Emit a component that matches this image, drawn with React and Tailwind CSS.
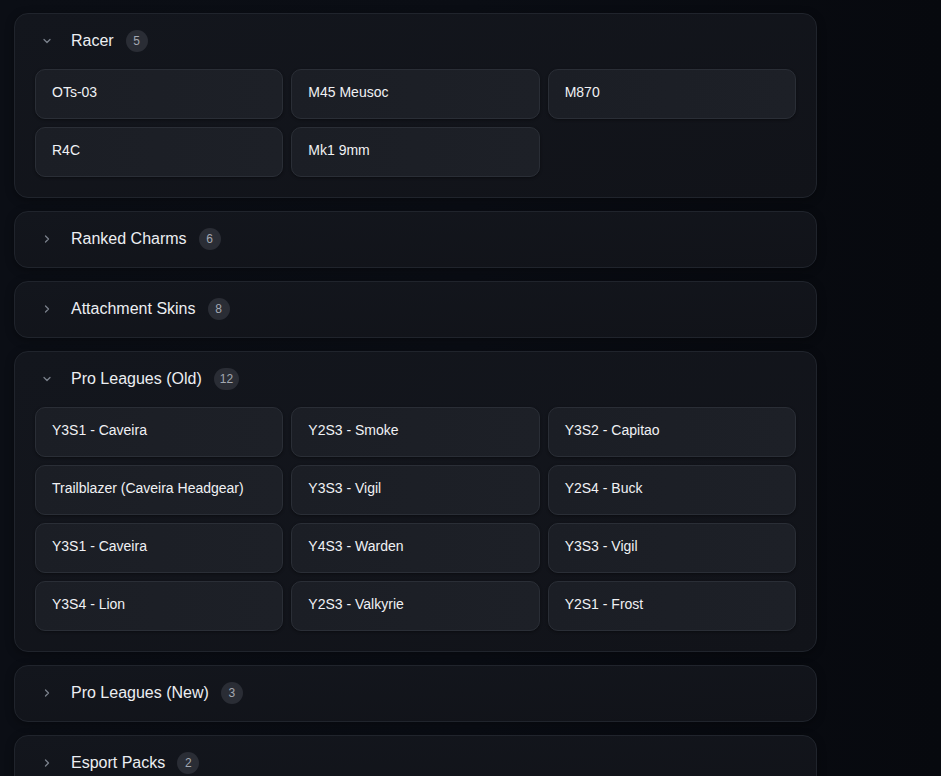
import React from "react";

const sections = [
  { title: "Racer", count: 5, open: true, items: ["OTs-03", "M45 Meusoc", "M870", "R4C", "Mk1 9mm"] },
  { title: "Ranked Charms", count: 6, open: false, items: [] },
  { title: "Attachment Skins", count: 8, open: false, items: [] },
  {
    title: "Pro Leagues (Old)",
    count: 12,
    open: true,
    items: [
      "Y3S1 - Caveira",
      "Y2S3 - Smoke",
      "Y3S2 - Capitao",
      "Trailblazer (Caveira Headgear)",
      "Y3S3 - Vigil",
      "Y2S4 - Buck",
      "Y3S1 - Caveira",
      "Y4S3 - Warden",
      "Y3S3 - Vigil",
      "Y3S4 - Lion",
      "Y2S3 - Valkyrie",
      "Y2S1 - Frost",
    ],
  },
  { title: "Pro Leagues (New)", count: 3, open: false, items: [] },
  { title: "Esport Packs", count: 2, open: false, items: [] },
];

function Chevron({ open }) {
  return (
    <svg width="12" height="12" viewBox="0 0 24 24" fill="none" stroke="#7b818c" strokeWidth="2.5" strokeLinecap="round" strokeLinejoin="round">
      {open ? <path d="M6 9l6 6 6-6" /> : <path d="M9 6l6 6-6 6" />}
    </svg>
  );
}

function Section({ s }) {
  return (
    <div className="w-[803px] shrink-0 rounded-[14px] border border-[#20242c] bg-gradient-to-br from-[#13161d] to-[#111319] shadow-[0_2px_8px_rgba(0,0,0,0.35)]">
      <div className="h-[55px] flex items-center pl-[26px] pb-[2px]">
        <Chevron open={s.open} />
        <span className="ml-[18px] text-[16px] text-[#eceef2] leading-none">{s.title}</span>
        <span className="ml-[12px] h-[22px] min-w-[22px] px-[6px] rounded-full bg-[#2a2d35] text-[#a3a8b1] text-[12px] flex items-center justify-center leading-none">
          {s.count}
        </span>
      </div>
      {s.open && (
        <div className="px-[20px] pb-[20px] grid grid-cols-3 gap-[8px]">
          {s.items.map((it, i) => (
            <div
              key={i}
              className="h-[50px] rounded-[10px] border border-[#2a2e36] bg-gradient-to-r from-[#1b1e25] to-[#1d2027] pl-[16px] pt-[12px] text-[14px] leading-5 text-[#f0f1f4] shadow-[0_1px_3px_rgba(0,0,0,0.4)]"
            >
              {it}
            </div>
          ))}
        </div>
      )}
    </div>
  );
}

export default function App() {
  return (
    <div
      className="w-[941px] h-[776px] overflow-hidden bg-gradient-to-r from-[#0b0e15] via-[#0a0d14] to-[#07090e] pt-[13px] pl-[14px] flex flex-col gap-[13px]"
      style={{ fontFamily: '"Liberation Sans", Arial, sans-serif' }}
    >
      {sections.map((s, i) => (
        <Section key={i} s={s} />
      ))}
    </div>
  );
}
